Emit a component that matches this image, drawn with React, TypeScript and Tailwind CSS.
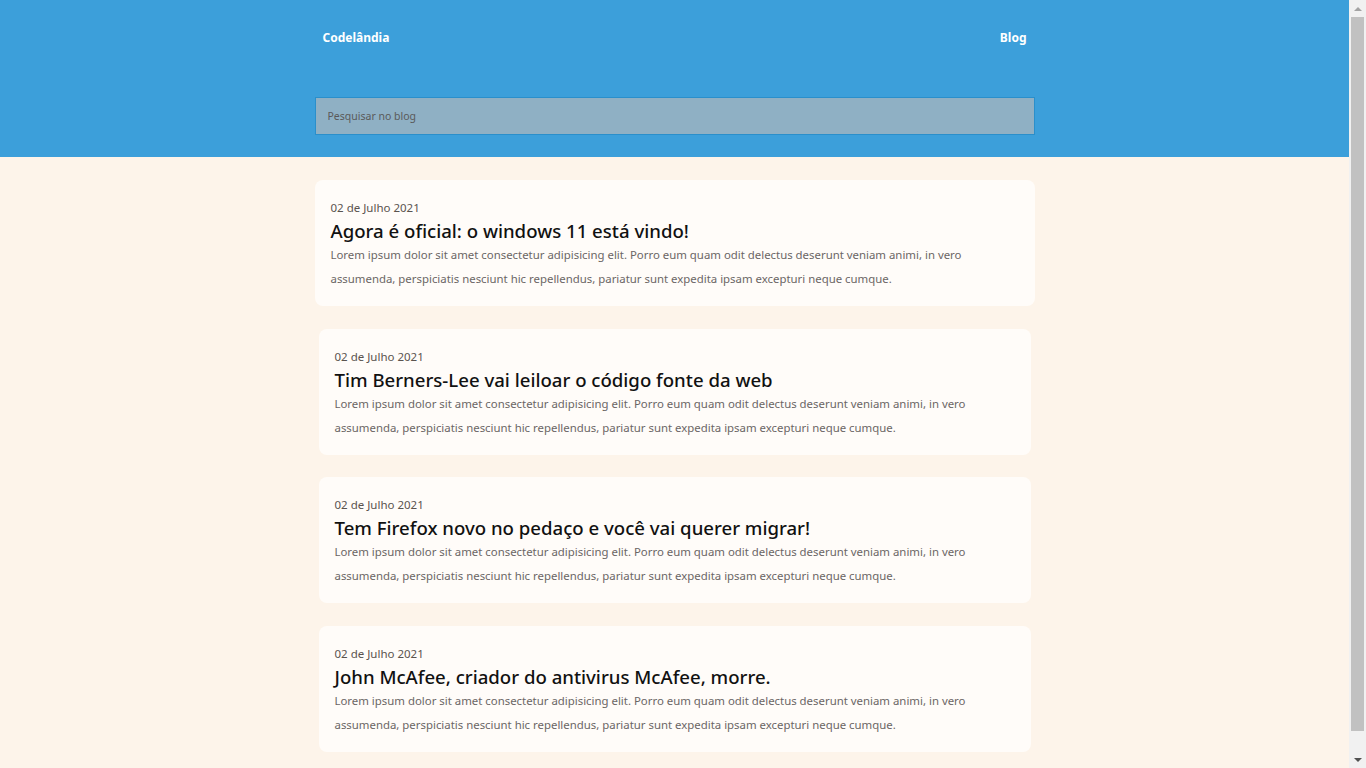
const posts = [
  { date: "02 de Julho 2021", title: "Agora é oficial: o windows 11 está vindo!" },
  { date: "02 de Julho 2021", title: "Tim Berners-Lee vai leiloar o código fonte da web" },
  { date: "02 de Julho 2021", title: "Tem Firefox novo no pedaço e você vai querer migrar!" },
  { date: "02 de Julho 2021", title: "John McAfee, criador do antivirus McAfee, morre." },
]

const lorem =
  "Lorem ipsum dolor sit amet consectetur adipisicing elit. Porro eum quam odit delectus deserunt veniam animi, in vero assumenda, perspiciatis nesciunt hic repellendus, pariatur sunt expedita ipsam excepturi neque cumque."

function Card({ date, title, first }: { date: string; title: string; first: boolean }) {
  return (
    <article
      className={
        first
          ? "h-[126px] rounded-lg bg-[#fffcf9] px-4 pt-[21px]"
          : "mx-1 h-[126px] rounded-lg bg-[#fffcf9] px-4 pt-[21px]"
      }
    >
      <p className="text-[11.5px] leading-[14px] text-[#5a534f]">{date}</p>
      <h2 className="mt-1 text-[18.6px] leading-[24px] font-medium text-[#111]">{title}</h2>
      <p className="text-[11.4px] leading-[24px] text-[#6b6665]">{lorem}</p>
    </article>
  )
}

// the page scrollbar seen in the shot
function Scrollbar() {
  return (
    <div className="flex h-screen w-[17px] shrink-0 flex-col bg-[#f1f1f1]">
      <div className="flex h-[17px] items-center justify-center">
        <div className="h-0 w-0 border-x-[4px] border-b-[4px] border-x-transparent border-b-[#a3a3a3]" />
      </div>
      <div className="flex-1 px-[2px]">
        <div className="h-[714px] bg-[#c1c1c1]" />
      </div>
      <div className="flex h-[17px] items-center justify-center">
        <div className="h-0 w-0 border-x-[4px] border-t-[4px] border-x-transparent border-t-[#505050]" />
      </div>
    </div>
  )
}

export default function App() {
  return (
    <div className="flex h-screen overflow-hidden font-['Noto_Sans',sans-serif]">
      <div className="min-w-0 flex-1 bg-[#fdf4ea] pb-[38px]">
        <header className="h-[157px] bg-[#3c9fda]">
          <div className="mx-auto w-[720px] pt-[28px]">
            <nav className="flex h-[20px] items-center justify-between px-2 text-[12px] font-bold text-white">
              <span>Codelândia</span>
              <span>Blog</span>
            </nav>
            <input
              className="mt-[49px] h-[38px] w-full border border-[#2a8fcb] bg-[#8fb0c4] px-3 text-[10.5px] text-[#444] placeholder:text-[#5a5a5a] outline-none"
              placeholder="Pesquisar no blog"
            />
          </div>
        </header>

        <main className="mx-auto mt-[23px] flex w-[720px] flex-col gap-[22.5px]">
          {posts.map((p, i) => (
            <Card key={p.title} date={p.date} title={p.title} first={i === 0} />
          ))}
        </main>
      </div>
      <Scrollbar />
    </div>
  )
}
